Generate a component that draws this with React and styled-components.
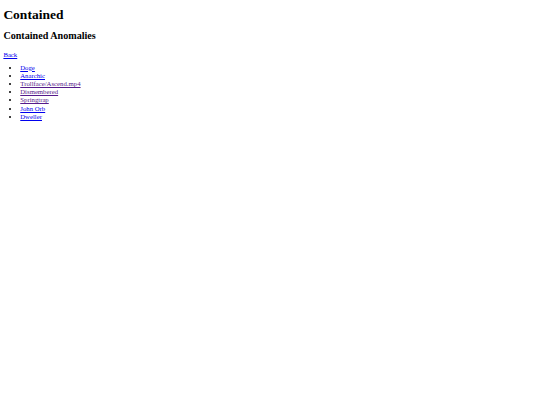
import React from 'react';
import styled, { createGlobalStyle } from 'styled-components';

// the shot is a 1280x960 page shrunk to 540x405, so every size is scaled down
const Global = createGlobalStyle`
    html, body {
        background: #fff;
    }
    body {
        margin: 3.375px;
        font-family: "Liberation Serif", "Times New Roman", serif;
        font-size: 6.75px;
        color: #000;
    }
`;

const Title = styled.h1`
    font-size: 13.5px;
    line-height: 15px;
    font-weight: bold;
    margin: 3.5px 0 8.2px;
`;

const SubTitle = styled.h2`
    font-size: 10.125px;
    line-height: 12px;
    font-weight: bold;
    margin: 8.2px 0 8.6px;
`;

const Para = styled.p`
    line-height: 8px;
    margin: 8.6px 0 4.9px;
`;

const Link = styled.a`
    color: ${(p) => (p.$visited ? '#551a8b' : '#0000ee')};
    text-decoration: underline;
    text-decoration-thickness: 0.6px;
    text-underline-offset: 0.5px;
`;

const List = styled.ul`
    margin: 4.9px 0;
    padding-left: 16.875px;
    list-style: disc;
`;

const Item = styled.li`
    line-height: 8.2px;
`;

const anomalies = [
    { name: 'Doge' },
    { name: 'Anarchic' },
    { name: 'Trollface/Ascend.mp4', visited: true },
    { name: 'Dismembered', visited: true },
    { name: 'Springtrap', visited: true },
    { name: 'John Orb' },
    { name: 'Dweller' },
];

export default function App() {
    return (
        <>
            <Global />
            <Title>Contained</Title>
            <SubTitle>Contained Anomalies</SubTitle>
            <Para>
                <Link href="#">Back</Link>
            </Para>
            <List>
                {anomalies.map((a) => (
                    <Item key={a.name}>
                        <Link href="#" $visited={a.visited}>{a.name}</Link>
                    </Item>
                ))}
            </List>
        </>
    );
}
